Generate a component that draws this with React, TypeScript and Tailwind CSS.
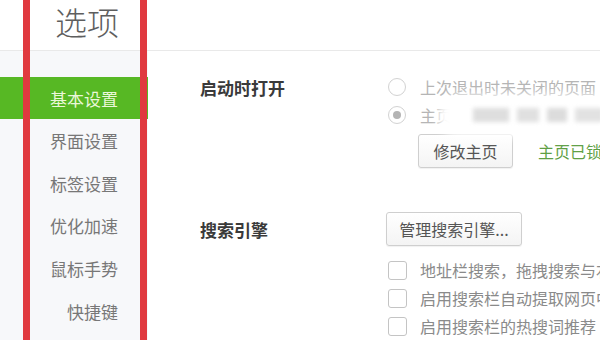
const menu = ["基本设置", "界面设置", "标签设置", "优化加速", "鼠标手势", "快捷键"];

const searchOptions = [
  "地址栏搜索，拖拽搜索与右键搜索使用的搜索引擎",
  "启用搜索栏自动提取网页中的关键词",
  "启用搜索栏的热搜词推荐",
];

function Radio({ checked }: { checked?: boolean }) {
  return (
    <span className="flex h-[18px] w-[18px] shrink-0 items-center justify-center rounded-full border border-[#d2d2d2] bg-white">
      {checked && <span className="h-[8px] w-[8px] rounded-full bg-[#b4b4b4]" />}
    </span>
  );
}

function Checkbox() {
  return <span className="h-[19px] w-[19px] shrink-0 rounded-[3px] border border-[#c4c4c4] bg-white" />;
}

export default function App() {
  return (
    <div className="relative h-[340px] w-[600px] overflow-hidden bg-white font-['Noto_Sans_CJK_SC','Microsoft_YaHei',sans-serif]">
      {/* Header */}
      <header className="flex h-[51px] items-center border-b border-[#e9e9e9] pb-[8px] pl-[55px]">
        <h1 className="text-[32px] font-light leading-none text-[#5e5e5e]">选项</h1>
      </header>

      <div className="flex h-[289px]">
        {/* Sidebar */}
        <nav className="w-[148px] shrink-0 bg-[#f7f8fa] pt-[26px]">
          {menu.map((item, i) => (
            <div
              key={item}
              className={
                i === 0
                  ? "flex h-[42px] items-center justify-end bg-[#57b824] pr-[30px] text-[17px] leading-none text-[#eaf7d8]"
                  : "flex h-[42.7px] items-center justify-end pr-[30px] text-[17px] leading-none text-[#777]"
              }
            >
              {item}
            </div>
          ))}
        </nav>

        {/* Content */}
        <main className="relative flex-1 whitespace-nowrap pl-[52px] pt-[25px]">
          <section className="flex">
            <div className="flex h-[22px] w-[188px] shrink-0 items-center text-[17px] font-bold leading-none text-[#3a3a3a]">
              启动时打开
            </div>
            <div className="flex flex-col">
              <label className="flex h-[22px] items-center gap-[14px] text-[16px] leading-none text-[#b5b5b5]">
                <Radio />
                上次退出时未关闭的页面
              </label>
              <label className="mt-[6px] flex h-[22px] items-center gap-[14px] text-[16px] leading-none text-[#b5b5b5]">
                <Radio checked />
                主页
              </label>
              <div className="mt-[8px] flex items-center gap-[25px] pl-[30px]">
                <button className="h-[34px] w-[95px] rounded-[3px] border border-[#cfcfcf] bg-gradient-to-b from-white to-[#f4f4f4] text-[16px] text-[#555] shadow-[0_1px_1px_rgba(0,0,0,0.06)]">
                  修改主页
                </button>
                <span className="text-[16px] text-[#5f9f45]">主页已锁定，防止被篡改</span>
              </div>
            </div>
          </section>

          <section className="mt-[44px] flex">
            <div className="flex h-[34px] w-[186px] shrink-0 items-center text-[17px] font-bold leading-none text-[#3a3a3a]">
              搜索引擎
            </div>
            <div className="flex flex-col">
              <button className="h-[34px] w-[136px] rounded-[3px] border border-[#cfcfcf] bg-gradient-to-b from-white to-[#f4f4f4] text-[16px] text-[#555] shadow-[0_1px_1px_rgba(0,0,0,0.06)]">
                管理搜索引擎...
              </button>
              <div className="mt-[13px] flex flex-col gap-[6px] pl-[2px]">
                {searchOptions.map((t) => (
                  <label key={t} className="flex h-[22px] items-center gap-[13px] text-[16px] leading-none text-[#8a8a8a]">
                    <Checkbox />
                    {t}
                  </label>
                ))}
              </div>
            </div>
          </section>

          {/* privacy blur mask over the homepage address */}
          <div className="absolute left-[290px] top-[44px] h-[42px] w-[220px] rounded-[20px] bg-white blur-[5px]" />
          <div className="absolute left-[325px] top-[57px] flex gap-[8px] blur-[2px]">
            <span className="h-[14px] w-[36px] bg-[#dedede]" />
            <span className="h-[14px] w-[22px] bg-[#e0e0e0]" />
            <span className="h-[14px] w-[20px] bg-[#dcdcdc]" />
            <span className="h-[14px] w-[28px] bg-[#e2e2e2]" />
            <span className="h-[14px] w-[30px] bg-[#dedede]" />
          </div>
        </main>
      </div>

      {/* red annotation frame */}
      <div className="absolute bottom-0 left-[23px] top-0 w-[7px] bg-[#e0393f]" />
      <div className="absolute bottom-0 left-[140px] top-0 w-[7px] bg-[#e0393f]" />
    </div>
  );
}
